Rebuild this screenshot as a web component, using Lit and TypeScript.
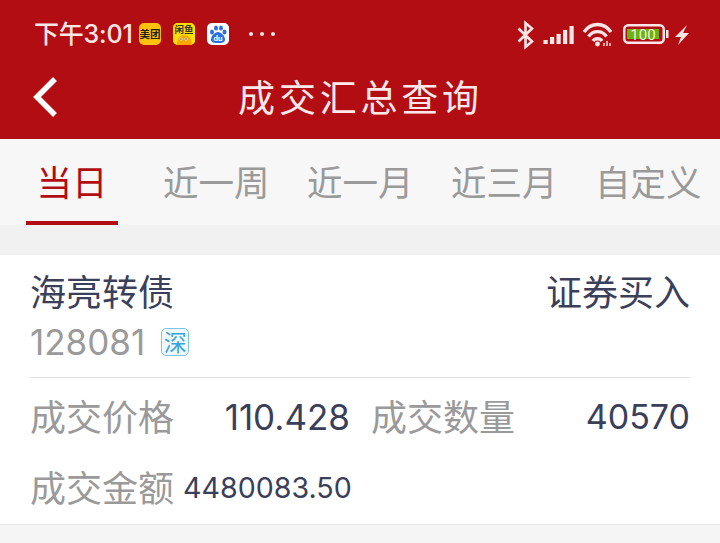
import { LitElement, html, css } from "lit";
import { customElement } from "lit/decorators.js";

@customElement("app-root")
export class AppRoot extends LitElement {
  static styles = css`
    :host { display: block; width: 720px; height: 543px; overflow: hidden; background: #f5f5f5; font-family: "Noto Sans CJK SC", "Noto Sans", Roboto, sans-serif; }
    .head { background: #b30d14; height: 139px; display: flex; flex-direction: column; color: #fff; }
    .status { height: 68px; display: flex; align-items: center; padding: 0 0 0 34px; box-sizing: border-box; }
    .time { font-size: 25px; font-weight: 500; color: #fde6e6; font-family: Inter, "Noto Sans CJK SC", sans-serif; line-height: 32px; width: 105px; white-space: nowrap; letter-spacing: -0.2px; }
    .app { width: 22px; height: 22px; border-radius: 5px; display: flex; align-items: center; justify-content: center; font-size: 10.5px; line-height: 10px; color: #222; flex: none; overflow: hidden; font-weight: 700; }
    .mt { background: #fdc20d; margin-right: 12px; }
    .xy { background: #fde000; margin-right: 12px; }
    .bd { background: #fff; margin-right: 20px; }
    .dots { display: flex; gap: 7px; margin-right: 242px; }
    .dots i { width: 4px; height: 4px; border-radius: 50%; background: #fde6e6; }
    .sys { display: flex; align-items: center; flex: none; }
    .title { flex: 1; position: relative; display: flex; align-items: center; justify-content: center; padding-bottom: 15px; padding-left: 1px; font-size: 37px; letter-spacing: 3.800px; color: #fbe9e9; }
    .back { position: absolute; left: 31px; top: 6px; }
    .tabs { height: 86px; background: #f7f7f7; display: flex; }
    .tab { font-size: 35.500px; color: #9a9a9a; line-height: 84px; white-space: nowrap; position: relative; text-align: center; flex: none; }
    .tab.on { color: #b30d14; width: 92px; margin-left: 26px; margin-right: 45px; }
    .tab.on::after { content: ""; position: absolute; left: 0; right: 0; bottom: 0; height: 4px; background: #b30d14; }
    .t2 { width: 104px; margin-right: 40px; }
    .gap { height: 30px; background: #f1f1f1; }
    .card { background: #fff; height: 270px; box-sizing: border-box; padding: 0 30px; border-bottom: 1px solid #e6e6e6; display: flex; flex-direction: column; }
    .row1 { display: flex; justify-content: space-between; margin-top: 11px; height: 48px; align-items: center; font-size: 36px; color: #3a405a; line-height: 48px; }
    .code { display: flex; align-items: center; height: 50px; margin-top: 3px; color: #9a9a9a; font-size: 35px; font-family: Inter, sans-serif; line-height: 50px; }
    .badge { margin-left: 16px; width: 28px; height: 28px; box-sizing: border-box; border: 1.500px solid #7cc4ea; border-radius: 5px; background: #f1f9fd; color: #3da4dc; font-size: 23px; line-height: 24px; text-align: center; font-family: "Noto Sans CJK SC", sans-serif; }
    .line { height: 1px; background: #e4e4e4; margin-top: 10px; }
    .row2 { display: grid; grid-template-columns: 320px 1fr; margin-top: 11px; height: 50px; align-items: center; }
    .pair { display: flex; justify-content: space-between; align-items: center; }
    .l { font-size: 36px; color: #9a9a9a; line-height: 48px; white-space: nowrap; }
    .v { font-size: 35px; color: #3a405a; font-family: Inter, sans-serif; white-space: nowrap; line-height: 48px; margin-top: 4px; }
    .p2 .v { font-size: 34px; }
    .row3 { display: flex; align-items: center; margin-top: 23px; height: 48px; gap: 9px; }
    .row3 .v { font-size: 28.600px; }
    .p2 { padding-left: 21px; }
  `;

  render() {
    return html`
      <div class="head">
        <div class="status">
          <div class="time">下午3:01</div>
          <div class="app mt">美团</div>
          <div class="app xy"><svg width="22" height="22" viewBox="0 0 22 22"><rect width="22" height="22" fill="#fde000"/><path d="M4 22c0-7 3-10 7-10s8 3 8 10z" fill="#f8a800"/><circle cx="8" cy="16" r="1.500" fill="#fff"/><circle cx="13" cy="16" r="1.500" fill="#fff"/><circle cx="8" cy="16" r=".8" fill="#333"/><circle cx="13" cy="16" r=".8" fill="#333"/><text x="11" y="10" font-size="9.500" text-anchor="middle" fill="#333" font-family="Noto Sans CJK SC">闲鱼</text></svg></div>
          <div class="app bd"><svg width="20" height="20" viewBox="0 0 20 20"><g fill="#2b6fe0"><ellipse cx="4" cy="8" rx="2" ry="2.500"/><ellipse cx="8" cy="4" rx="2" ry="2.600"/><ellipse cx="13" cy="4" rx="2" ry="2.600"/><ellipse cx="16.500" cy="8" rx="2" ry="2.500"/><path d="M10 8c3 0 7 4 7 7.500 0 3-3 3.500-7 3.500s-7-.5-7-3.500C3 12 7 8 10 8z"/></g><text x="10" y="17" font-size="8" text-anchor="middle" fill="#fff" font-family="Roboto">du</text></svg></div>
          <div class="dots"><i></i><i></i><i></i></div>
          <div class="sys">
            <svg width="192" height="36" viewBox="0 0 192 36" fill="none">
              <path d="M1.500 12.500 L15 25.500 L8.500 31 V7 L15 12.500 L1.500 25.500" stroke="#fde6e6" stroke-width="2.600"/>
              <g fill="#fde6e6"><rect x="26.500" y="24" width="4.200" height="4"/><rect x="33" y="21" width="4.200" height="7"/><rect x="39.500" y="18" width="4.200" height="10"/><rect x="46" y="14" width="4.200" height="14"/><rect x="52.500" y="10" width="4.200" height="18"/></g>
              <g stroke="#fde6e6" stroke-width="3.400"><path d="M67 16 C 74 6, 87 6, 94 16"/><path d="M71.500 20.500 C 76 14, 85 14, 89.500 20.500"/><path d="M76 25 C 78 22, 83 22, 85 25"/></g>
              <circle cx="80.500" cy="28" r="2.400" fill="#fde6e6"/>
              <path d="M87 27v3m3-5v5m3-3v3" stroke="#fde6e6" stroke-width="1.400"/>
              <rect x="107.250" y="9.250" width="39.500" height="17.500" rx="4" stroke="#fde6e6" stroke-width="2.500"/>
              <rect x="110" y="13" width="32" height="10" fill="#6bb10f"/>
              <rect x="149" y="14" width="2.500" height="8" fill="#fde6e6"/>
              <text x="126" y="23.500" font-size="15" fill="#eef7d8" text-anchor="middle" font-family="Roboto">100</text>
              <path d="M170 9 L158 21 h6 l-3 8 l11-12 h-6 z" fill="#fde6e6"/>
            </svg>
          </div>
        </div>
        <div class="title">
          <svg class="back" width="28" height="46" viewBox="0 0 28 46" fill="none"><path d="M24 5 L6 23 L24 41" stroke="#fff" stroke-width="5.500"/></svg>
          成交汇总查询
        </div>
      </div>
      <div class="tabs">
        <div class="tab on">当日</div>
        <div class="tab t2">近一周</div>
        <div class="tab t2">近一月</div>
        <div class="tab t2">近三月</div>
        <div class="tab">自定义</div>
      </div>
      <div class="gap"></div>
      <div class="card">
        <div class="row1"><span>海亮转债</span><span>证券买入</span></div>
        <div class="code">128081<span class="badge">深</span></div>
        <div class="line"></div>
        <div class="row2">
          <div class="pair"><span class="l">成交价格</span><span class="v">110.428</span></div>
          <div class="pair p2"><span class="l">成交数量</span><span class="v">40570</span></div>
        </div>
        <div class="row3"><span class="l">成交金额</span><span class="v">4480083.50</span></div>
      </div>
    `;
  }
}
